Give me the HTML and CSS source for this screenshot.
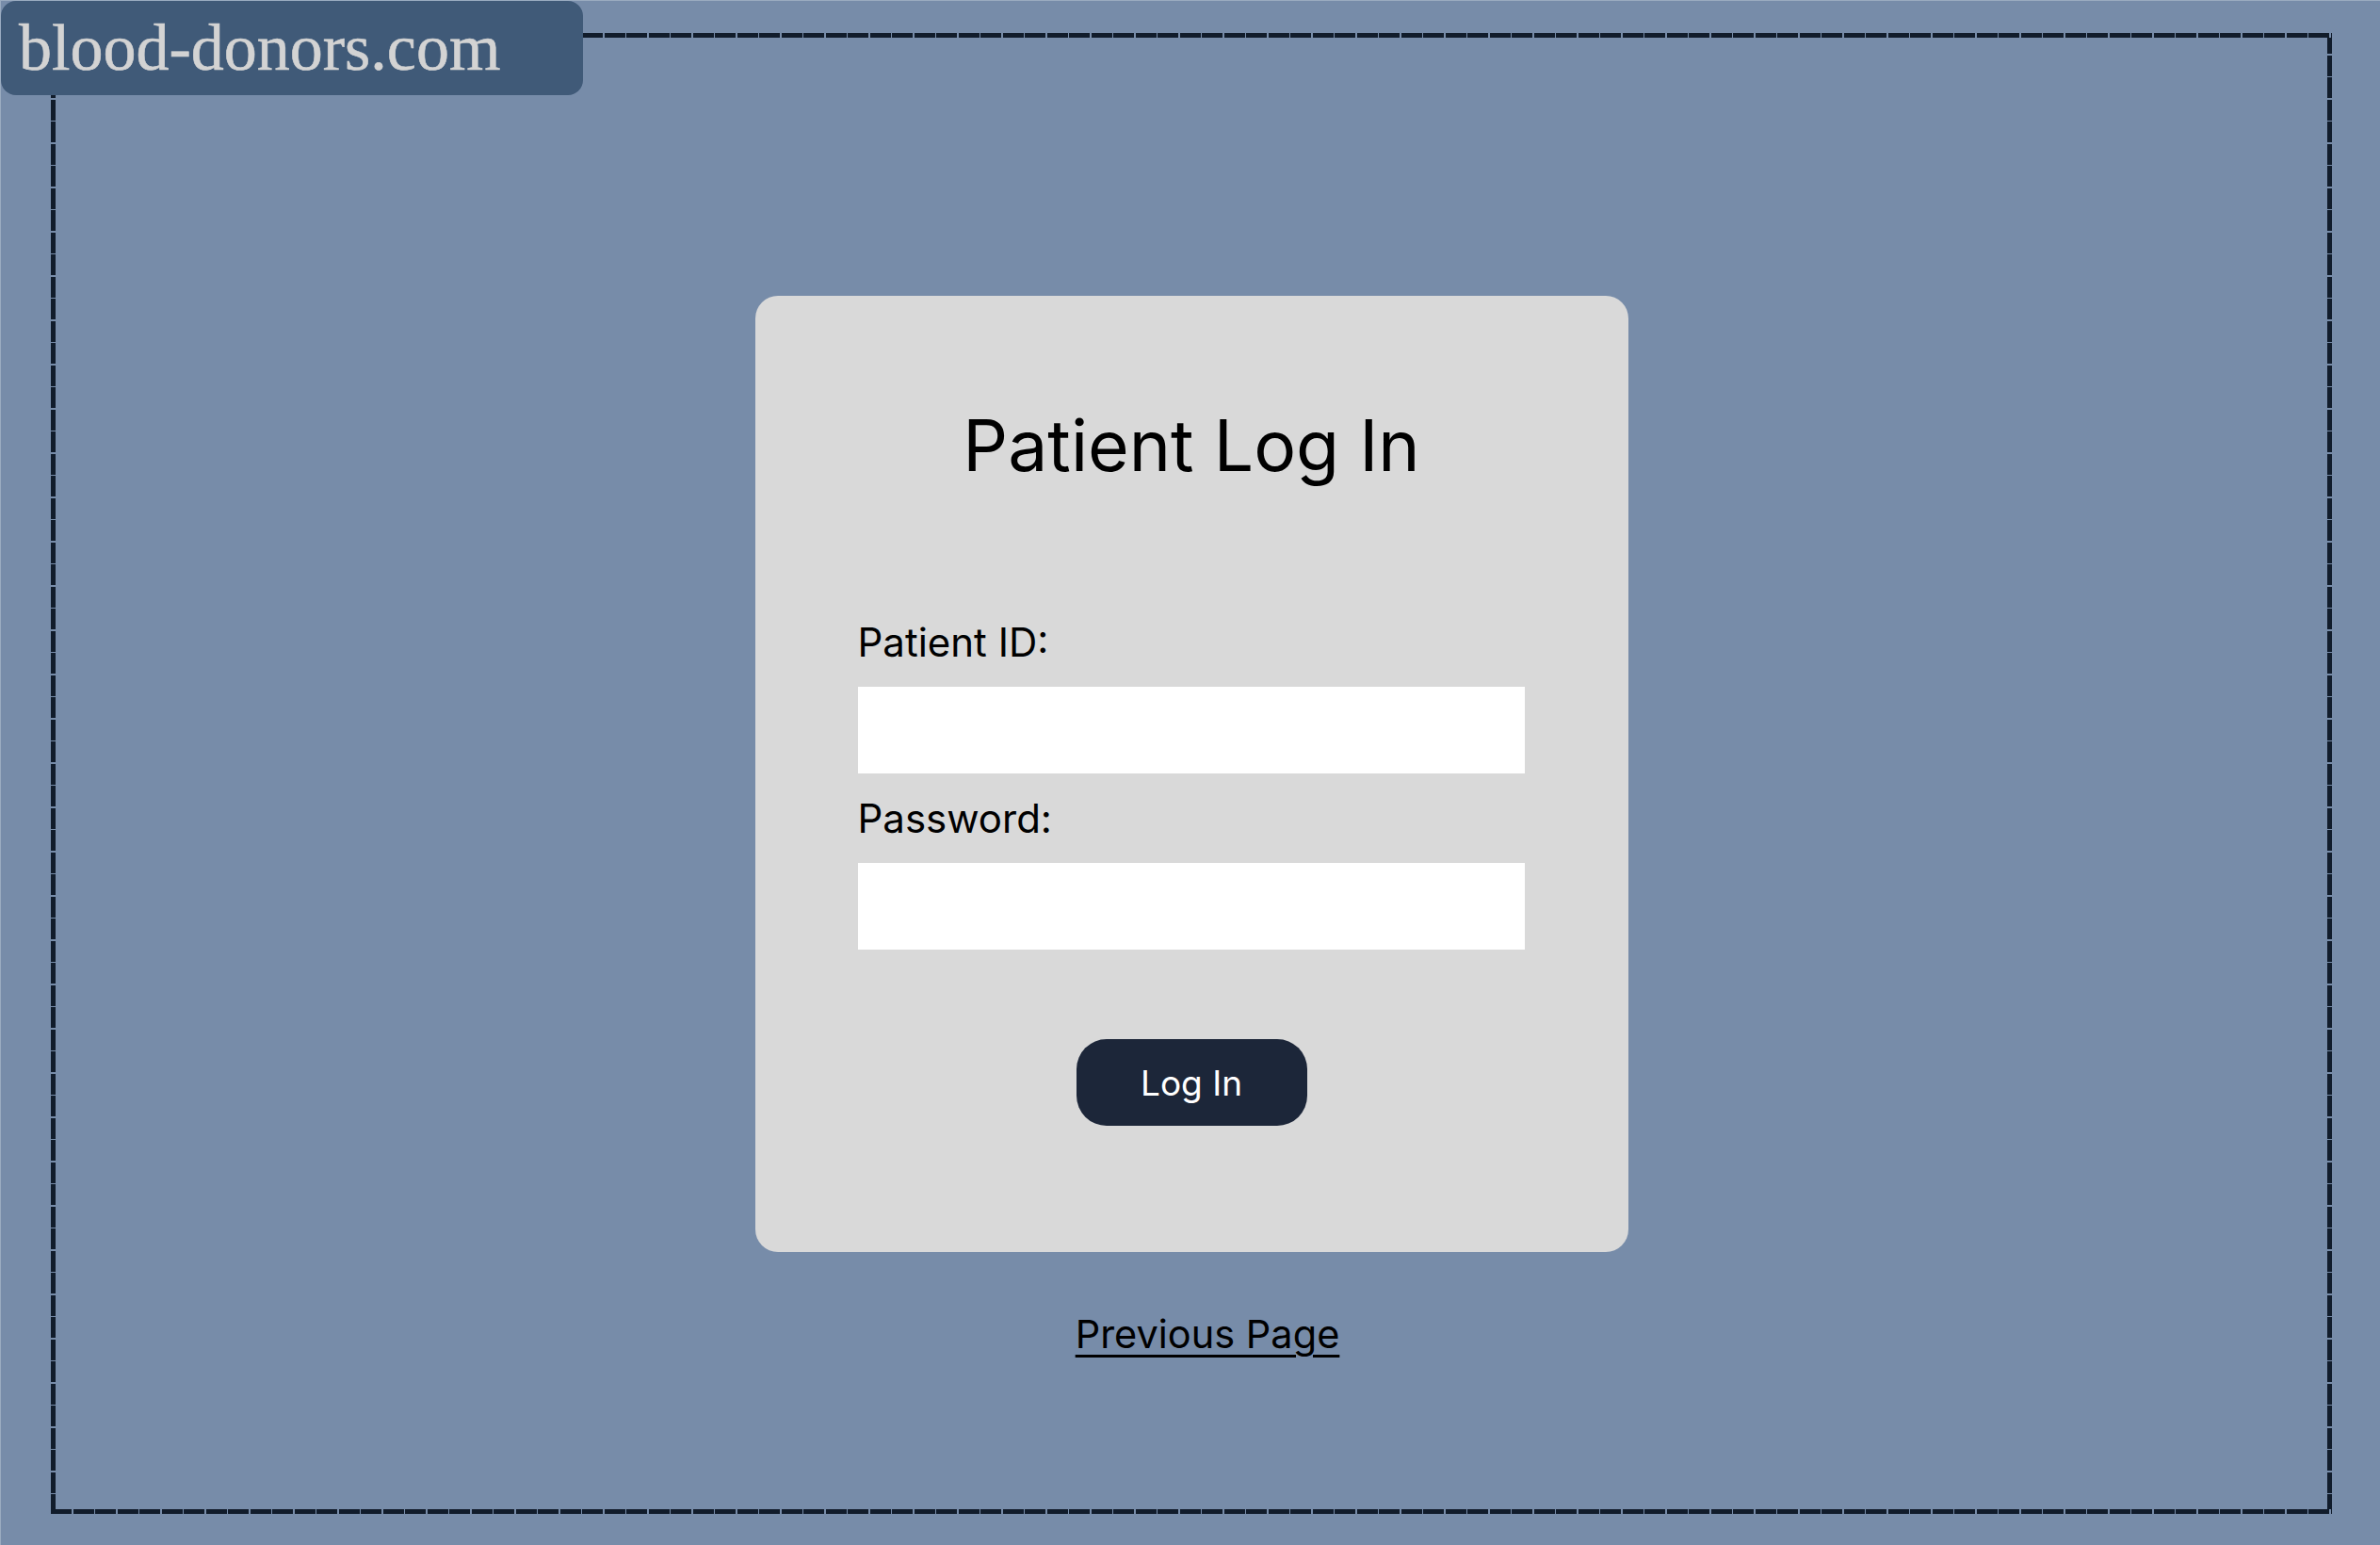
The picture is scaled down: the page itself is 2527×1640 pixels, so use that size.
FILE: index.html
```html
<!DOCTYPE html>
<html lang="en">
<head>
<meta charset="utf-8">
<title>Patient Log In - blood-donors.com</title>
<link rel="stylesheet" href="styles.css">
</head>
<body>
<div class="page">
  <div class="logo">blood-donors.com</div>
  <main class="frame">
    <section class="card">
      <h1 class="title">Patient Log In</h1>
      <form class="form">
        <label class="label" for="pid">Patient ID:</label>
        <input class="field" id="pid" type="text">
        <label class="label" for="pw">Password:</label>
        <input class="field field-last" id="pw" type="password">
        <button class="btn" type="button">Log In</button>
      </form>
    </section>
    <a class="back" href="#">Previous Page</a>
  </main>
</div>
</body>
</html>
```
FILE: styles.css
```css
* { box-sizing: border-box; }
html, body { margin: 0; padding: 0; }
body {
  background: #778ca9;
  font-family: Inter, "Noto Sans", sans-serif;
}
.page {
  position: relative;
  width: 2527px;
  height: 1640px;
  border-top: 1px solid #9aabc0;
  border-left: 1px solid #9aabc0;
  padding: 34px 0 0 53px;
}
.logo {
  position: absolute;
  left: 0;
  top: 0;
  width: 618px;
  height: 100px;
  background: #405a78;
  border-radius: 16px;
  color: #d3d3d3;
  font-family: "Liberation Serif", "Times New Roman", serif;
  font-size: 70px;
  line-height: 70px;
  padding: 15px 0 0 19px;
  -webkit-text-stroke: 0.6px #d3d3d3;
  z-index: 2;
}
.frame {
  width: 2422px;
  height: 1572px;
  padding: 5px;
  display: flex;
  flex-direction: column;
  align-items: center;
  background:
    repeating-linear-gradient(90deg, #111c2b 0 22px, #778ca9 22px 23.5px) left top / 100% 5px no-repeat,
    repeating-linear-gradient(90deg, #111c2b 0 22px, #778ca9 22px 23.5px) left bottom / 100% 5px no-repeat,
    repeating-linear-gradient(180deg, #111c2b 0 22px, #778ca9 22px 23.5px) left top / 5px 100% no-repeat,
    repeating-linear-gradient(180deg, #111c2b 0 22px, #778ca9 22px 23.5px) right top / 5px 100% no-repeat;
}
.card {
  margin-top: 274px;
  width: 927px;
  height: 1015px;
  background: #d9d9d9;
  border-radius: 24px;
  padding: 114px 109px 0;
  display: flex;
  flex-direction: column;
}
.title {
  margin: 0 0 139px;
  font-weight: 400;
  font-size: 75px;
  line-height: 1.2;
  text-align: center;
  color: #000;
}
.form {
  display: flex;
  flex-direction: column;
}
.label {
  display: block;
  font-size: 42px;
  line-height: 50px;
  color: #000;
  margin-bottom: 22px;
}
.field {
  display: block;
  width: 708px;
  height: 92px;
  border: none;
  background: #fff;
  margin: 0 0 23px;
  padding: 0 16px;
  font: 36px Inter, sans-serif;
  outline: none;
}
.field-last { margin-bottom: 95px; }
.btn {
  align-self: center;
  width: 245px;
  height: 92px;
  border: none;
  border-radius: 32px;
  background: #1c2639;
  color: #fff;
  font-family: Inter, sans-serif;
  font-size: 37px;
  padding: 0;
  cursor: pointer;
}
.back {
  margin-top: 63px;
  margin-left: 34px;
  font-size: 41.5px;
  line-height: 1.2;
  color: #000;
  text-decoration: underline;
  text-decoration-thickness: 3px;
  text-underline-offset: 7px;
}
```
